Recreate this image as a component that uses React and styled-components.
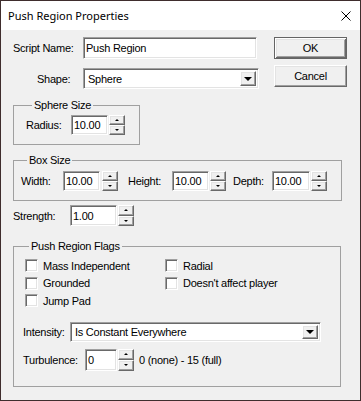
import styled, { createGlobalStyle, css } from "styled-components";

const Global = createGlobalStyle`
  html, body { margin: 0; padding: 0; background: #f0f0f0; }
`;

const sunken = css`
  box-sizing: border-box;
  background: #fff;
  border: 1px solid;
  border-color: #a0a0a0 #fff #fff #a0a0a0;
  box-shadow: inset 1px 1px 0 #696969, inset -1px -1px 0 #e3e3e3;
`;

const raised = css`
  box-sizing: border-box;
  background: #f0f0f0;
  border: 1px solid;
  border-color: #fff #696969 #696969 #fff;
  box-shadow: inset -1px -1px 0 #a0a0a0, inset 1px 1px 0 #e3e3e3;
`;

const Window = styled.div`
  width: 361px;
  height: 401px;
  box-sizing: border-box;
  border: 1px solid #3f2d2d;
  background: #f0f0f0;
  display: flex;
  flex-direction: column;
  font-family: "Liberation Sans", Arial, sans-serif;
  font-size: 11px;
  letter-spacing: -0.25px;
  color: #000;
`;

const TitleBar = styled.div`
  height: 29px;
  background: #fff;
  display: flex;
  align-items: center;
  justify-content: space-between;
  padding: 0 9px 0 7px;
  font-family: "Noto Sans", "Open Sans", sans-serif;
  font-size: 11px;
  letter-spacing: 0;
`;

const Body = styled.div`
  padding: 7px 19px 0 12px;
  display: flex;
  flex-direction: column;
`;

const TopArea = styled.div`
  display: flex;
  align-items: flex-start;
`;

const Fields = styled.div`
  display: flex;
  flex-direction: column;
  gap: 9px;
  width: 246px;
`;

const Row = styled.div`
  display: flex;
  align-items: center;
  margin-top: ${(p) => p.$mt || 0}px;
  padding-left: ${(p) => p.$pl || 0}px;
`;

const Label = styled.span`
  display: block;
  width: ${(p) => p.$w}px;
  margin-left: ${(p) => p.$ml || 0}px;
  white-space: nowrap;
  flex: none;
`;

const TextBox = styled.input`
  ${sunken};
  width: ${(p) => p.$w}px;
  height: ${(p) => p.$h || 20}px;
  padding: 0 0 0 2px;
  margin: 0;
  font: inherit;
  letter-spacing: inherit;
  color: #000;
  outline: none;
  flex: none;
`;

const Combo = styled.div`
  ${sunken};
  width: ${(p) => p.$w}px;
  height: ${(p) => p.$h}px;
  display: flex;
  align-items: center;
  justify-content: space-between;
  padding: 2px 2px 2px 4px;
  flex: none;
`;

const DropButton = styled.span`
  ${raised};
  width: 16px;
  height: 100%;
  display: flex;
  align-items: center;
  justify-content: center;
  &::after {
    content: "";
    border-left: 4px solid transparent;
    border-right: 4px solid transparent;
    border-top: 4px solid #000;
  }
`;

const Buttons = styled.div`
  display: flex;
  flex-direction: column;
  gap: 6px;
  margin-left: 15px;
`;

const Button = styled.button`
  ${raised};
  width: 73px;
  height: 22px;
  margin: 0;
  padding: 0;
  font: inherit;
  letter-spacing: inherit;
  color: #000;
  ${(p) =>
    p.$default &&
    css`
      border-color: #646464;
      box-shadow: inset 1px 1px 0 #fff, inset -1px -1px 0 #696969,
        inset 2px 2px 0 #e3e3e3, inset -2px -2px 0 #a0a0a0;
    `}
`;

const Spin = styled.div`
  display: flex;
  flex-direction: column;
  width: 16px;
  height: ${(p) => p.$h}px;
  margin-left: ${(p) => p.$ml ?? 1}px;
  flex: none;
`;

const SpinHalf = styled.span`
  ${raised};
  flex: 1;
  display: flex;
  align-items: center;
  justify-content: center;
  &::after {
    content: "";
    border-left: 2px solid transparent;
    border-right: 2px solid transparent;
    ${(p) =>
      p.$up
        ? "border-bottom: 2px solid #000;"
        : "border-top: 2px solid #000;"}
  }
`;

const Group = styled.fieldset`
  box-sizing: border-box;
  width: ${(p) => p.$w}px;
  margin: ${(p) => p.$mt}px 0 0 0;
  padding: ${(p) => p.$pad};
  border: 1px solid #a0a0a0;
  min-width: 0;
`;

const Legend = styled.legend`
  padding: 0 2px;
  margin-left: 6px;
  line-height: 13px;
`;

const Checks = styled.div`
  display: grid;
  grid-template-columns: 140px 1fr;
  grid-auto-rows: 17.5px;
  margin-left: 2px;
`;

const Check = styled.label`
  display: flex;
  align-items: center;
  gap: 5px;
  white-space: nowrap;
`;

const Box = styled.span`
  ${sunken};
  width: 13px;
  height: 13px;
  flex: none;
`;

const Note = styled.span`
  margin-left: 5px;
`;

const CloseIcon = () => (
  <svg width="10" height="10" viewBox="0 0 10 10">
    <path d="M0.5 0.5 L9.5 9.5 M9.5 0.5 L0.5 9.5" stroke="#000" strokeWidth="1" />
  </svg>
);

const Spinner = ({ h, ml }) => (
  <Spin $h={h} $ml={ml}>
    <SpinHalf $up />
    <SpinHalf />
  </Spin>
);

export default function App() {
  return (
    <>
      <Global />
      <Window>
        <TitleBar>
          <span>Push Region Properties</span>
          <CloseIcon />
        </TitleBar>
        <Body>
          <TopArea>
            <Fields>
              <Row>
                <Label $w={70}>Script Name:</Label>
                <TextBox $w={174} $h={22} defaultValue="Push Region" />
              </Row>
              <Row>
                <Label $w={46} $ml={24}>Shape:</Label>
                <Combo $w={176} $h={21}>
                  <span>Sphere</span>
                  <DropButton />
                </Combo>
              </Row>
            </Fields>
            <Buttons>
              <Button $default>OK</Button>
              <Button>Cancel</Button>
            </Buttons>
          </TopArea>

          <Group $w={127} $mt={10} $pad="3px 0 9px 12px">
            <Legend>Sphere Size</Legend>
            <Row>
              <Label $w={45}>Radius:</Label>
              <TextBox $w={37} defaultValue="10.00" />
              <Spinner h={20} />
            </Row>
          </Group>

          <Group $w={329} $mt={9} $pad="4px 0 9px 7px">
            <Legend>Box Size</Legend>
            <Row>
              <Label $w={42}>Width:</Label>
              <TextBox $w={37} defaultValue="10.00" />
              <Spinner h={20} ml={2} />
              <Label $w={44} $ml={10}>Height:</Label>
              <TextBox $w={37} defaultValue="10.00" />
              <Spinner h={20} />
              <Label $w={39} $ml={7}>Depth:</Label>
              <TextBox $w={38} defaultValue="10.00" />
              <Spinner h={20} />
            </Row>
          </Group>

          <Row $mt={4}>
            <Label $w={57}>Strength:</Label>
            <TextBox $w={47} $h={21} defaultValue="1.00" />
            <Spinner h={21} />
          </Row>

          <Group $w={328} $mt={14} $pad="4px 0 15px 9px">
            <Legend>Push Region Flags</Legend>
            <Checks>
              <Check><Box />Mass Independent</Check>
              <Check><Box />Radial</Check>
              <Check><Box />Grounded</Check>
              <Check><Box />Doesn't affect player</Check>
              <Check><Box />Jump Pad</Check>
            </Checks>
            <Row $mt={12}>
              <Label $w={47}>Intensity:</Label>
              <Combo $w={251} $h={20}>
                <span>Is Constant Everywhere</span>
                <DropButton />
              </Combo>
            </Row>
            <Row $mt={7}>
              <Label $w={62}>Turbulence:</Label>
              <TextBox $w={32} $h={22} defaultValue="0" />
              <Spinner h={22} />
              <Note>0 (none) - 15 (full)</Note>
            </Row>
          </Group>
        </Body>
      </Window>
    </>
  );
}
